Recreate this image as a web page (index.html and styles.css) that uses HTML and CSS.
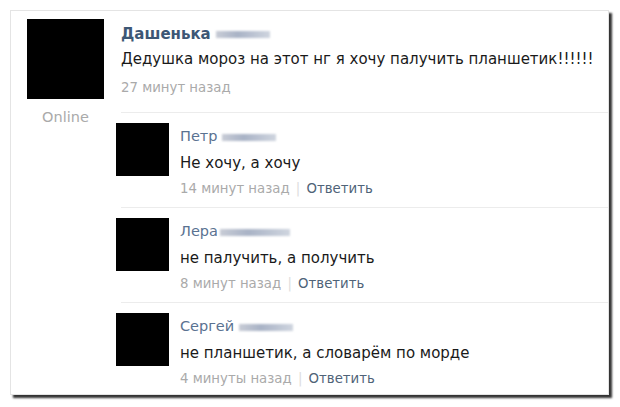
FILE: index.html
```html
<!DOCTYPE html>
<html>
<head>
	<meta http-equiv="Content-Type" content="text/html; charset=UTF-8">
	<title>Комментарии</title>
	<link rel="stylesheet" href="styles.css">
</head>
<body>

<div class="card">
	<div class="side">
		<div class="ava big"></div>
		<div class="online">Online</div>
	</div>
	<div class="main">
		<div class="head">
			<div class="name bold">Дашенька <span class="blur"></span></div>
			<div class="text">Дедушка мороз на этот нг я хочу палучить планшетик!!!!!!</div>
			<div class="meta first">27 минут назад</div>
		</div>

		<hr class="sep">
		<div class="reply">
			<div class="ava small"></div>
			<div class="body">
				<div class="name">Петр <span class="blur"></span></div>
				<div class="text">Не хочу, а хочу</div>
				<div class="meta">14 минут назад <span class="bar">|</span> <span class="link">Ответить</span></div>
			</div>
		</div>

		<hr class="sep">
		<div class="reply">
			<div class="ava small"></div>
			<div class="body">
				<div class="name">Лера<span class="blur wide"></span></div>
				<div class="text">не палучить, а получить</div>
				<div class="meta">8 минут назад <span class="bar">|</span> <span class="link">Ответить</span></div>
			</div>
		</div>

		<hr class="sep">
		<div class="reply">
			<div class="ava small"></div>
			<div class="body">
				<div class="name">Сергей <span class="blur"></span></div>
				<div class="text">не планшетик, а словарём по морде</div>
				<div class="meta">4 минуты назад <span class="bar">|</span> <span class="link">Ответить</span></div>
			</div>
		</div>
	</div>
</div>

</body>
</html>
```

FILE: styles.css
```css
html { background: #fff; margin: 0; padding: 0; }
body { margin: 0; padding: 10px; font-family: "DejaVu Sans", Verdana, sans-serif; color: #222; }

.card { display: flex; gap: 12px; width: 581px; height: 375px; padding: 8px 0 0 16px; }
.card { background: #fff; border: 1px solid #e4e4e4; box-shadow: 3px 3px 2px #333; }

.side { width: 77px; display: flex; flex-direction: column; align-items: center; }
.ava { background: #000; flex: none; }
.ava.big { width: 77px; height: 80px; }
.ava.small { width: 53px; height: 53px; }
.online { margin-top: 10px; line-height: 16px; font-size: 14.5px; color: #aaa; }

.main { flex: 1; }
.head { padding: 5px 0 0 5px; }
.name { line-height: 20px; font-size: 14.5px; color: #5a7291; }
.name.bold { font-weight: bold; font-size: 15px; color: #3d5775; }
.text { margin-top: 5px; line-height: 20px; font-size: 15px; color: #1a1a1a; }
.meta { margin-top: 6px; line-height: 20px; font-size: 13.3px; color: #aaa; }
.meta.first { margin-top: 9px; }
.bar { color: #ddd; margin: 0 2px; }
.link { color: #4f6378; }

.blur { display: inline-block; width: 54px; height: 7px; vertical-align: middle; filter: blur(1px); }
.blur { background: linear-gradient(90deg, #c8ccd6, #a9b3c6 40%, #cfd5df); }
.blur.wide { width: 70px; margin-left: 2px; }

.sep { height: 1px; margin: 14px 0 0 5px; border: 0; background: #ececec; }
.reply + .sep { margin-top: 8px; }
.reply { display: flex; gap: 11px; padding-top: 10px; }
.reply .name { margin-top: 3px; }
.reply .text { margin-top: 7px; }
```
